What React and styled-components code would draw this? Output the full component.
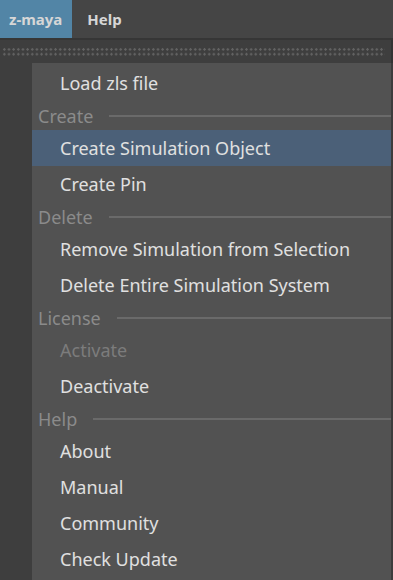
import styled, { createGlobalStyle } from 'styled-components';

const GlobalStyle = createGlobalStyle`
  body {
    margin: 0;
    background: #3e3e3e;
    font-family: "Noto Sans", "Open Sans", sans-serif;
  }
`;

const Window = styled.div`
  width: 393px;
  height: 580px;
  overflow: hidden;
  display: flex;
  flex-direction: column;
  background: #3e3e3e;
`;

const MenuBar = styled.div`
  display: flex;
  height: 38px;
  background: #454545;
`;

const MenuTab = styled.div`
  display: flex;
  align-items: center;
  padding: 0 ${({ $active }) => ($active ? '10px 0 9px' : '15px')};
  font-size: 15px;
  font-weight: 700;
  color: #d6d6d6;
  background: ${({ $active }) => ($active ? '#5285a6' : 'transparent')};
`;

const Rule = styled.div`
  height: 2px;
  background: #363636;
`;

const GripBar = styled.div`
  height: 23px;
  display: flex;
  align-items: center;
  padding: 0 6px 0 2px;
  border-right: 2px solid #333;
`;

const Dots = styled.div`
  flex: 1;
  height: 10px;
  background-image: radial-gradient(circle, #636363 1px, transparent 1.4px);
  background-size: 4.67px 4.8px;
`;

const Body = styled.div`
  flex: 1;
  display: flex;
`;

const Gutter = styled.div`
  width: 32px;
  background: #3e3e3e;
`;

const Panel = styled.div`
  flex: 1;
  background: #525252;
  border-right: 2px solid #3c3c3c;
  padding-top: 2px;
`;

const Item = styled.div`
  height: 36px;
  line-height: 36px;
  padding-left: 28px;
  font-size: 18px;
  white-space: nowrap;
  color: ${({ $disabled }) => ($disabled ? '#7c7c7c' : '#e0e0e0')};
  background: ${({ $active }) => ($active ? '#4b6078' : 'transparent')};
`;

const Section = styled.div`
  height: 29px;
  display: flex;
  align-items: center;
  padding-left: 6px;
  font-size: 18px;
  color: #8b8b8b;

  &::after {
    content: '';
    flex: 1;
    height: 2px;
    margin-left: 16px;
    background: #6a6a6a;
  }
`;

const menu = [
  { label: 'Load zls file' },
  { section: 'Create' },
  { label: 'Create Simulation Object', active: true },
  { label: 'Create Pin' },
  { section: 'Delete' },
  { label: 'Remove Simulation from Selection' },
  { label: 'Delete Entire Simulation System' },
  { section: 'License' },
  { label: 'Activate', disabled: true },
  { label: 'Deactivate' },
  { section: 'Help' },
  { label: 'About' },
  { label: 'Manual' },
  { label: 'Community' },
  { label: 'Check Update' },
];

export default function App() {
  return (
    <>
      <GlobalStyle />
      <Window>
        <MenuBar>
          <MenuTab $active>z-maya</MenuTab>
          <MenuTab>Help</MenuTab>
        </MenuBar>
        <Rule />
        <GripBar>
          <Dots />
        </GripBar>
        <Body>
          <Gutter />
          <Panel>
            {menu.map((m, i) =>
              m.section ? (
                <Section key={i}>{m.section}</Section>
              ) : (
                <Item key={i} $active={m.active} $disabled={m.disabled}>
                  {m.label}
                </Item>
              )
            )}
          </Panel>
        </Body>
      </Window>
    </>
  );
}
